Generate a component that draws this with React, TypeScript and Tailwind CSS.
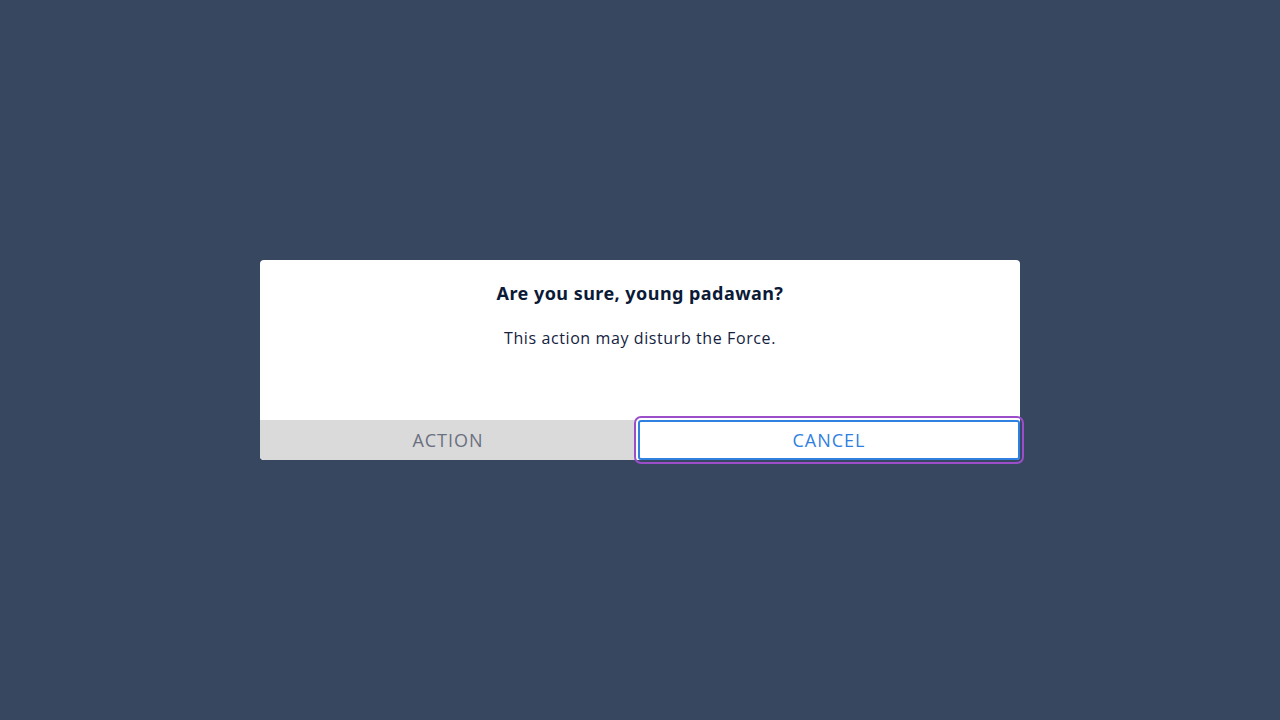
import React from 'react';

const App: React.FC = () => {
  return (
    <div className="w-[1280px] h-[720px] bg-[#37475f] flex items-center justify-center">
      <div className="w-[760px] h-[200px] bg-white rounded-[4px] flex flex-col">
        <div className="flex-1 flex flex-col items-center pt-[19px]">
          <h2 className="text-[18px] leading-[28px] font-bold text-[#0b1a36] font-['Noto_Sans',sans-serif] tracking-[0.45px]">
            Are you sure, young padawan?
          </h2>
          <p className="mt-[19px] text-[16px] leading-[24px] text-[#14223f] font-['Open_Sans',sans-serif] tracking-[0.6px]">
            This action may disturb the Force.
          </p>
        </div>
        <div className="h-[40px] flex">
          <button className="w-[376px] h-full bg-[#dadada] rounded-bl-[4px] text-[#6b7080] text-[18px] uppercase tracking-[1px] font-['Open_Sans',sans-serif]">
            Action
          </button>
          <button className="ml-[2px] flex-1 h-full bg-white border-2 border-[#2f80e0] rounded-[3px] outline-2 outline-offset-2 outline-[#9b4dca] text-[#2f80e0] text-[18px] uppercase tracking-[1px] font-['Open_Sans',sans-serif]">
            Cancel
          </button>
        </div>
      </div>
    </div>
  );
};

export default App;
